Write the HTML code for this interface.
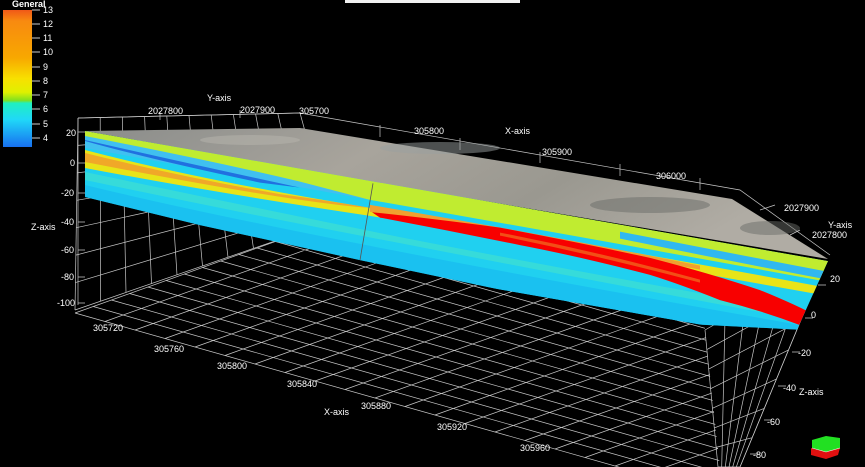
<!DOCTYPE html>
<html><head><meta charset="utf-8"><style>
html,body{margin:0;padding:0;background:#000;width:865px;height:467px;overflow:hidden}
svg{display:block}
text{font-family:"Liberation Sans",sans-serif;font-size:9px;fill:#fff}
</style></head><body>
<svg id="s" width="865" height="467" viewBox="0 0 865 467">
<defs>
<linearGradient id="cb" x1="0" y1="0" x2="0" y2="1">
<stop offset="0" stop-color="#f05818"/><stop offset="0.08" stop-color="#f88a10"/>
<stop offset="0.35" stop-color="#f8a800"/><stop offset="0.5" stop-color="#f8e000"/>
<stop offset="0.6" stop-color="#e0f000"/><stop offset="0.66" stop-color="#80e020"/>
<stop offset="0.68" stop-color="#20f0c0"/><stop offset="0.8" stop-color="#20d8f8"/>
<stop offset="1" stop-color="#1870f0"/></linearGradient>
<linearGradient id="top" x1="0" y1="0" x2="1" y2="0.3">
<stop offset="0" stop-color="#8a8c8a"/><stop offset="0.4" stop-color="#a8a49c"/>
<stop offset="0.7" stop-color="#9a9890"/><stop offset="1" stop-color="#b0aca4"/></linearGradient>
<clipPath id="fc"><polygon points="85,131 828,131 797,205 700,217 500,217 360,212 200,205 85,197"/></clipPath>
<clipPath id="flc"><polygon points="0,0 705,0 705,330 720,467 0,467"/></clipPath>
</defs>
<rect x="345" y="0" width="175" height="3" fill="#f0f0f0"/>
<text x="12" y="7" font-weight="bold" font-size="8">General</text>
<rect x="3" y="10" width="29" height="137" fill="url(#cb)"/>
<g stroke="#ccc" stroke-width="1">
<line x1="32" y1="10" x2="40" y2="10"/><line x1="32" y1="24" x2="40" y2="24"/><line x1="32" y1="38" x2="40" y2="38"/><line x1="32" y1="52" x2="40" y2="52"/><line x1="32" y1="67" x2="40" y2="67"/><line x1="32" y1="81" x2="40" y2="81"/><line x1="32" y1="95" x2="40" y2="95"/><line x1="32" y1="109" x2="40" y2="109"/><line x1="32" y1="124" x2="40" y2="124"/><line x1="32" y1="138" x2="40" y2="138"/></g>
<g font-size="7"><text x="43" y="13">13</text><text x="43" y="27">12</text><text x="43" y="41">11</text><text x="43" y="55">10</text><text x="43" y="70">9</text><text x="43" y="84">8</text><text x="43" y="98">7</text><text x="43" y="112">6</text><text x="43" y="127">5</text><text x="43" y="141">4</text></g>
<g id="grid" stroke="#c8c8c8" stroke-width="0.7" fill="none">
<path d="M78,118 L78,305 M78,118 L300,113 L740,190 L830,255 M825,262 L740,467"/>
<path d="M78,132h7 M78,163h7 M78,193h7 M78,222h7 M78,250h7 M78,277h7 M78,303h7"/>
<path d="M160,120 L160,112 M240,118 L240,110 M380,137 L380,125 M460,150 L460,138 M540,163 L540,152 M620,176 L620,164 M700,190 L700,178 M760,210 L775,205 M790,235 L800,230"/>
<path d="M818,285h8 M805,318h8 M792,352h8 M778,386h8 M764,420h8 M750,454h8"/>
</g>
<g id="floor" stroke="#c8c8c8" stroke-width="0.7" fill="none" clip-path="url(#flc)"></g>
<polygon points="85,131 300,128 732,199 828,259 372,182" fill="url(#top)"/>
<ellipse cx="440" cy="148" rx="60" ry="6" fill="#9aa0a0" opacity="0.5"/>
<ellipse cx="650" cy="205" rx="60" ry="8" fill="#6a6c68" opacity="0.5"/>
<ellipse cx="770" cy="228" rx="30" ry="7" fill="#6a6c68" opacity="0.5"/>
<ellipse cx="250" cy="140" rx="50" ry="5" fill="#b8b6ae" opacity="0.5"/>
<g transform="matrix(1,0.175,0,1,0,-14.9)">
<g clip-path="url(#fc)">
<rect x="80" y="125" width="760" height="100" fill="#20d0f0"/>
<path d="M80,125 H840 V152 Q600,150 370,150 Q250,147 80,142Z" fill="#c0ec30"/>
<path d="M80,136 Q200,138 300,144 L370,150 L80,148Z" fill="#40c0f0"/>
<path d="M85,141 Q150,148 260,152 L300,150 Q200,146 85,140Z" fill="#2070e0"/>
<path d="M85,150 Q200,160 370,158 Q550,155 840,158 V166 Q500,165 370,166 Q220,170 85,168Z" fill="#e8e418"/>
<path d="M85,153 Q180,160 280,160 Q330,158 370,158 Q300,166 85,162Z" fill="#f0a828"/>
<path d="M370,155 Q550,154 700,158 L700,162 Q520,160 370,162Z" fill="#f0a030"/>
<path d="M620,138 Q720,140 840,142 V150 Q720,148 620,145Z" fill="#30b8f0"/>
<path d="M85,172 Q250,178 400,182 Q600,186 840,186 V195 Q600,192 400,188 Q250,186 85,180Z" fill="#40e0d0" opacity="0.7"/>
<path d="M372,162 Q430,158 500,155 Q580,156 650,159 Q710,164 760,172 Q795,180 820,189 L800,200 Q760,192 720,189 Q680,180 650,176 Q580,170 520,169 Q450,167 380,166Z" fill="#f80000"/>
<path d="M500,160 Q600,162 700,172 L700,175 Q600,166 500,163Z" fill="#f07020" opacity="0.7"/>
<path d="M85,185 Q300,200 840,200 V225 H85Z" fill="#18b8f0" opacity="0.6"/>
</g>
<line x1="373" y1="133" x2="360" y2="212" stroke="#555" stroke-width="0.8"/>
</g>
<text x="148" y="114">2027800</text><text x="207" y="101">Y-axis</text><text x="240" y="113">2027900</text><text x="299" y="114">305700</text>
<text x="414" y="134">305800</text><text x="505" y="134">X-axis</text><text x="542" y="155">305900</text><text x="656" y="179">306000</text>
<text x="784" y="211">2027900</text><text x="828" y="228">Y-axis</text><text x="812" y="238">2027800</text>
<text x="66" y="136">20</text><text x="70" y="166">0</text><text x="61" y="196">-20</text><text x="31" y="230">Z-axis</text><text x="61" y="225">-40</text><text x="61" y="253">-60</text><text x="61" y="280">-80</text><text x="57" y="306">-100</text>
<text x="93" y="331">305720</text><text x="154" y="352">305760</text><text x="217" y="369">305800</text><text x="287" y="387">305840</text><text x="324" y="415">X-axis</text><text x="361" y="409">305880</text><text x="437" y="430">305920</text><text x="520" y="451">305960</text>
<text x="830" y="282">20</text><text x="811" y="318">0</text><text x="798" y="356">-20</text><text x="783" y="391">-40</text><text x="799" y="395">Z-axis</text><text x="767" y="425">-60</text><text x="753" y="458">-80</text>
<polygon points="812,440 826,436 840,438 840,448 826,452 812,448" fill="#22e022"/>
<polygon points="811,448 826,452 840,448 838,455 826,459 811,455" fill="#e01010"/>
<polyline points="812,448 826,452 840,448" stroke="#fff" stroke-width="0.6" fill="none"/>
</svg>
<script>
(function(){
function lerp(a,b,t){return [a[0]+(b[0]-a[0])*t,a[1]+(b[1]-a[1])*t];}
function mk(id,fn){var d='';function L(a,b){d+='M'+a[0].toFixed(1)+','+a[1].toFixed(1)+'L'+b[0].toFixed(1)+','+b[1].toFixed(1);}fn(L);
var p=document.createElementNS('http://www.w3.org/2000/svg','path');p.setAttribute('d',d);document.getElementById(id).appendChild(p);}
mk('floor',function(L){
var A=[75,313],B=[735,500],D=[330,222],C=[D[0]+B[0]-A[0],D[1]+B[1]-A[1]];
for(var i=0;i<=14;i++){var t=i/14;L(lerp(A,D,t),lerp(B,C,t));}
for(var i=0;i<=22;i++){var t=i/22;L(lerp(A,B,t),lerp(D,C,t));}
});
mk('grid',function(L){
var P1=[78,118],P2=[300,113],P3=[330,222],P4=[75,310];
for(var i=0;i<=7;i++){var t=i/7;L(lerp(P1,P4,t),lerp(P2,P3,t));}
for(var i=0;i<=10;i++){var t=i/10;L(lerp(P1,P2,t),lerp(P4,P3,t));}
var Q1=[705,330],Q2=[825,262],Q3=[740,467],Q4=[718,467];
for(var i=0;i<=7;i++){var t=i/7;L(lerp(Q1,Q4,t),lerp(Q2,Q3,t));}
for(var i=0;i<=6;i++){var t=i/6;L(lerp(Q1,Q2,t),lerp(Q4,Q3,t));}
});
})();
</script>
</body></html>
